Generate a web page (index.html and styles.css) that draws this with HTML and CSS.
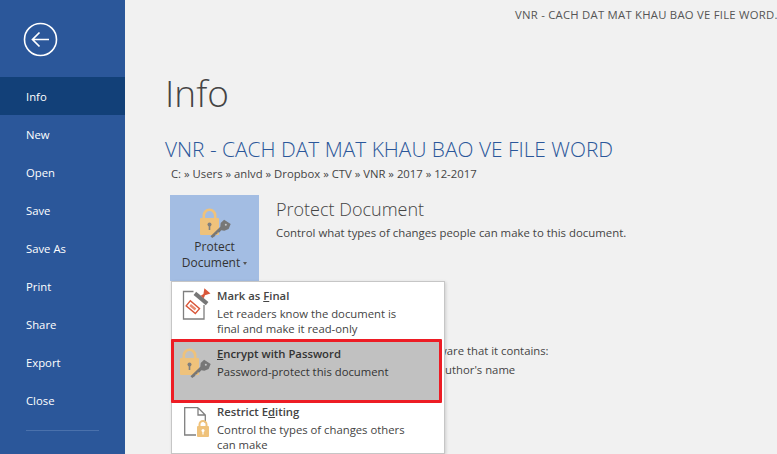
FILE: index.html
```html
<!DOCTYPE html>
<html lang="en">
<head>
<meta charset="utf-8">
<title>Info</title>
<link rel="stylesheet" href="styles.css">
</head>
<body>
<svg class="defs" width="0" height="0" aria-hidden="true">
  <defs>
    <g id="lockkey">
      <path d="M3.800 12V8.500a5.700 5.700 0 0 1 11.400 0V12" fill="none" stroke="#EFC27B" stroke-width="2.600"/>
      <rect x="0" y="11" width="19" height="17" rx="1" fill="#EFC27B"/>
      <circle cx="9.500" cy="17.500" r="2" fill="#7f7f7f"/>
      <rect x="8.700" y="18" width="1.600" height="5" fill="#7f7f7f"/>
      <path d="M12.200 31l-1.700-1.700 9.800-9.500.4-3.800 3.400-3.300 6.600 4.300-2.100 5-4.200 1.800-3.100-.5-2 2.200-1.700-.1-.3 1.700-1.700.3-.5 1.700z" fill="#777"/>
      <circle cx="25.800" cy="17.800" r="1" fill="#C9C9C9"/>
    </g>
  </defs>
</svg>
<nav class="side">
  <div class="back">
    <svg width="36" height="36" viewBox="0 0 36 36">
      <circle cx="17.500" cy="17.500" r="16" fill="none" stroke="#fff" stroke-width="1.600"/>
      <path d="M9.500 17.500H26M16.500 10.500l-7 7 7 7" fill="none" stroke="#fff" stroke-width="1.700"/>
    </svg>
  </div>
  <ul class="nav">
    <li class="nav-item active">Info</li>
    <li class="nav-item">New</li>
    <li class="nav-item">Open</li>
    <li class="nav-item">Save</li>
    <li class="nav-item">Save As</li>
    <li class="nav-item">Print</li>
    <li class="nav-item">Share</li>
    <li class="nav-item">Export</li>
    <li class="nav-item">Close</li>
  </ul>
  <div class="sep"></div>
</nav>
<main class="main">
  <div class="doc-title">VNR - CACH DAT MAT KHAU BAO VE FILE WORD.</div>
  <h1 class="page-title">Info</h1>
  <h2 class="file-title">VNR - CACH DAT MAT KHAU BAO VE FILE WORD</h2>
  <div class="path">C: » Users » anlvd » Dropbox » CTV » VNR » 2017 » 12-2017</div>
  <section class="protect">
    <div class="protect-btn">
      <svg class="protect-icon" width="32" height="32" viewBox="0 0 32 32"><use href="#lockkey"/></svg>
      <div class="protect-label">Protect<br>Document<span class="caret"></span></div>
    </div>
    <div class="protect-text">
      <div class="sec-title">Protect Document</div>
      <div class="sec-desc">Control what types of changes people can make to this document.</div>
    </div>
  </section>
  <section class="inspect">
    <div>Before publishing this file, be aware that it contains:</div>
    <div class="inspect-line">Document properties and author's name</div>
  </section>
  <div class="menu">
    <div class="menu-item item-final">
      <svg class="menu-icon" width="30" height="34" viewBox="0 0 30 34">
        <path d="M11.500 4.500H1.500V32H22V18" fill="none" stroke="#7f7f7f" stroke-width="1.300"/>
        <g transform="translate(19 11.500) rotate(40)">
          <rect x="-8" y="-2" width="16" height="4" fill="#777"/>
          <path d="M-2-2l1-3-3-5h8l-3 5 1 3z" fill="#D9573A"/>
        </g>
        <g transform="translate(11 20) rotate(40)">
          <rect x="-6" y="-3" width="12" height="6.500" fill="#fff" stroke="#D9573A" stroke-width="1.400"/>
          <rect x="-3.500" y="-1" width="7" height="2.500" fill="#E98A70"/>
        </g>
      </svg>
      <div class="menu-text">
        <div class="menu-title">Mark as <u>F</u>inal</div>
        <div class="menu-desc">Let readers know the document is<br>final and make it read-only</div>
      </div>
    </div>
    <div class="menu-item selected">
      <svg class="menu-icon lock-big" width="32" height="32" viewBox="0 0 32 32"><use href="#lockkey"/></svg>
      <div class="menu-text">
        <div class="menu-title"><u>E</u>ncrypt with Password</div>
        <div class="menu-desc">Password-protect this document</div>
      </div>
    </div>
    <div class="menu-item item-restrict">
      <svg class="menu-icon" width="26" height="31" viewBox="0 0 26 31">
        <path d="M14 .700H.700V28H12M14 .700v7.300h7.300M14 .700L21.300 8v8" fill="none" stroke="#7f7f7f" stroke-width="1.300"/>
        <path d="M15.500 20v-2.500a3.500 3.500 0 0 1 7 0V20" fill="none" stroke="#EFC27B" stroke-width="2"/>
        <rect x="13" y="19" width="12" height="11" rx="1" fill="#EFC27B"/>
        <circle cx="19" cy="23.500" r="1.500" fill="#fff"/>
        <rect x="18.400" y="23.500" width="1.200" height="4" fill="#fff"/>
      </svg>
      <div class="menu-text">
        <div class="menu-title">Restrict E<u>d</u>iting</div>
        <div class="menu-desc">Control the types of changes others<br>can make</div>
      </div>
    </div>
  </div>
</main>
</body>
</html>
```
FILE: styles.css
```css
* { box-sizing: border-box; }
html, body {
  margin: 0;
  width: 777px;
  height: 454px;
  overflow: hidden;
}
body {
  display: flex;
  background: #F1F1F1;
  color: #444;
  font-family: "Open Sans", "Noto Sans", sans-serif;
  font-size: 11.3px;
}
.defs { position: absolute; }
.side {
  flex: 0 0 125px;
  height: 454px;
  background: #2B579A;
  color: #fff;
  display: flex;
  flex-direction: column;
}
.back {
  height: 77px;
  padding: 22px 0 0 23px;
}
.back svg { display: block; }
.nav {
  list-style: none;
  margin: 0;
  padding: 0;
}
.nav-item {
  height: 38px;
  line-height: 40px;
  padding-left: 26px;
}
.nav-item.active { background: #124078; }
.sep {
  height: 1px;
  margin: 11px 26px 0;
  width: 73px;
  background: #4A71AC;
}
.main {
  flex: 1;
  position: relative;
  padding-left: 40px;
  min-width: 0;
}
.doc-title {
  height: 32px;
  padding: 7px 0 0 350px;
  line-height: 16px;
  white-space: nowrap;
  color: #555;
  letter-spacing: .25px;
}
.page-title {
  margin: 0;
  padding-top: 35px;
  font-size: 37px;
  line-height: 52px;
  font-weight: 300;
  color: #444;
}
.file-title {
  margin: 14px 0 0;
  height: 33px;
  line-height: 32px;
  font-size: 20.900px;
  font-weight: 300;
  color: #2B579A;
  white-space: nowrap;
}
.path {
  margin-left: 6px;
  line-height: 16px;
  height: 29px;
  color: #444;
  white-space: nowrap;
}
.protect {
  display: flex;
  margin-left: 5px;
  height: 86px;
}
.protect-btn {
  flex: 0 0 89px;
  background: #A3BDE3;
  text-align: center;
  color: #333;
  padding-top: 12px;
}
.protect-icon { display: block; margin: 0 0 0 30px; }
.protect-label { line-height: 16px; margin-top: 0; font-size: 12px; }
.caret {
  display: inline-block;
  margin-left: 3px;
  vertical-align: middle;
  border-style: solid;
  border-width: 3px 2.500px 0;
  border-color: #555 transparent transparent;
}
.protect-text { padding: 4px 0 0 17px; }
.sec-title {
  font-size: 18px;
  line-height: 20px;
  font-weight: 300;
  color: #444;
}
.sec-desc { margin-top: 6px; line-height: 16px; white-space: nowrap; font-size: 11.400px; }
.inspect {
  padding: 60px 0 0 111px;
  line-height: 19px;
  white-space: nowrap;
}
.inspect-line { padding-left: 24px; }
.menu {
  position: absolute;
  left: 46px;
  top: 281px;
  width: 274px;
  height: 173px;
  background: #fff;
  border: 1px solid #C6C6C6;
  box-shadow: 1px 1px 3px rgba(0,0,0,.15);
  padding-top: 1px;
}
.menu-item {
  position: relative;
  display: flex;
  padding-left: 45px;
  color: #444;
}
.item-final { height: 56px; padding-top: 5px; }
.item-final .menu-desc { margin-top: 3px; line-height: 14.500px; }
.selected {
  height: 64px;
  width: 271px;
  margin-left: -1px;
  padding-top: 4px;
  padding-left: 43px;
  background: #C1C1C1;
  border: 3px solid #ED1C24;
  border-radius: 1px;
  color: #333;
}
.item-restrict { height: 52px; padding-top: 1px; }
.menu-icon { position: absolute; left: 10px; top: 4px; }
.lock-big { left: 6px; top: 5px; }
.item-restrict .menu-icon { left: 12px; top: 4px; }
.menu-title {
  font-weight: 600;
  line-height: 16px;
  color: #444;
}
.selected .menu-title { color: #333; }
.menu-desc { margin-top: 2px; line-height: 15px; white-space: nowrap; }
```
